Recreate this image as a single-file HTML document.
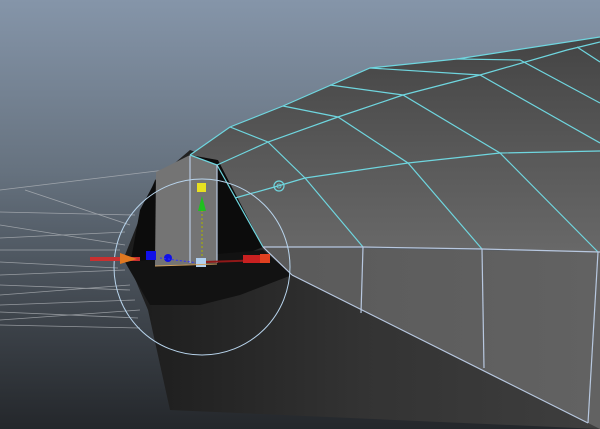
<!DOCTYPE html>
<html><head><meta charset="utf-8"><style>
html,body{margin:0;padding:0;width:600px;height:429px;overflow:hidden;background:#5a6676}
svg{display:block}
</style></head><body>
<svg width="600" height="429" viewBox="0 0 600 429" xmlns="http://www.w3.org/2000/svg">
<defs>
<linearGradient id="bg" x1="0" y1="0" x2="0" y2="1">
<stop offset="0" stop-color="#8595a9"/><stop offset="0.4" stop-color="#66727f"/><stop offset="0.75" stop-color="#3d434a"/><stop offset="1" stop-color="#24272b"/>
</linearGradient>
<linearGradient id="body" x1="0" y1="0" x2="1" y2="0">
<stop offset="0" stop-color="#1c1c1c"/><stop offset="0.5" stop-color="#333"/><stop offset="1" stop-color="#3e3e3e"/>
</linearGradient>
<linearGradient id="top" x1="0" y1="0" x2="0" y2="1">
<stop offset="0" stop-color="#444"/><stop offset="0.5" stop-color="#575757"/><stop offset="1" stop-color="#686868"/>
</linearGradient>
<linearGradient id="side" x1="0" y1="0" x2="1" y2="0">
<stop offset="0" stop-color="#5a5a5a"/><stop offset="1" stop-color="#626262"/>
</linearGradient>
</defs>
<rect width="600" height="429" fill="url(#bg)"/>
<g stroke="#b9bcc0" stroke-width="0.8" fill="none" opacity="0.7">
<line x1="0" y1="190" x2="165" y2="170"/>
<line x1="0" y1="212" x2="135" y2="215"/>
<line x1="25" y1="190" x2="130" y2="225"/>
<line x1="0" y1="225" x2="125" y2="245"/>
<line x1="0" y1="238" x2="125" y2="232"/>
<line x1="0" y1="250" x2="120" y2="250"/>
<line x1="0" y1="262" x2="118" y2="268"/>
<line x1="0" y1="275" x2="125" y2="270"/>
<line x1="0" y1="285" x2="130" y2="290"/>
<line x1="0" y1="295" x2="130" y2="285"/>
<line x1="0" y1="305" x2="135" y2="300"/>
<line x1="0" y1="312" x2="138" y2="318"/>
<line x1="0" y1="320" x2="140" y2="310"/>
<line x1="0" y1="325" x2="140" y2="328"/>
</g>
<polygon points="190,150 155,180 125,255 148,310 170,410 600,429 600,260 263,247 218,160" fill="url(#body)"/>
<polygon points="160,172 190,155 218,160 263,247 218,265 130,265 140,210" fill="#0c0c0c"/>
<polygon points="125,262 263,250 292,275 240,295 200,305 150,305" fill="#121212"/>
<polygon points="156,172 190,155 217,165 217,263 155,266" fill="#747474"/>
<polygon points="190,155 230,127 283,106 370,68 457,59 600,37 600,252 482,249 363,247 263,247 218,160" fill="url(#top)"/>
<polygon points="263,247 600,252 600,429 588,423 292,275" fill="url(#side)"/>
<g stroke="#6fd6df" stroke-width="1.2" fill="none">
<polyline points="190,155 230,127 283,106 370,68 457,59 600,37"/>
<polyline points="217,165 268,142 338,117 403,95 480,75 567,50 600,42"/>
<polyline points="235,198 278,186 305,178 408,163 500,153 600,151"/>
<polyline points="230,127 268,142 305,178 363,247"/>
<polyline points="283,106 338,117 408,163 482,249"/>
<polyline points="330,85 403,95 500,153 598,252"/>
<polyline points="370,68 480,75 600,143"/>
<polyline points="457,59 520,60 600,103"/>
<polyline points="577,47 600,62"/>
<line x1="217" y1="165" x2="263" y2="247"/>
<line x1="190" y1="155" x2="217" y2="165"/>
</g>
<g stroke="#b8c8e0" stroke-width="1.2" fill="none">
<polyline points="263,247 363,247 482,249 600,252"/>
<line x1="363" y1="247" x2="361" y2="313"/>
<line x1="482" y1="249" x2="484" y2="368"/>
<line x1="598" y1="252" x2="588" y2="423"/>
<line x1="263" y1="247" x2="292" y2="275"/>
<line x1="292" y1="275" x2="588" y2="423"/>
<line x1="190" y1="156" x2="190" y2="263"/>
<line x1="217" y1="165" x2="217" y2="263"/>
</g>
<circle cx="202" cy="267" r="88" fill="none" stroke="#b8d4ec" stroke-width="1"/>
<circle cx="279" cy="186" r="5" fill="none" stroke="#6fd6df" stroke-width="1.2"/>
<circle cx="279" cy="186" r="2" fill="none" stroke="#6fd6df" stroke-width="0.8"/>
<line x1="90" y1="259" x2="140" y2="259" stroke="#c83030" stroke-width="4"/>
<polygon points="120,253 137,259 120,264" fill="#e07820"/>
<rect x="146" y="251" width="10" height="9" fill="#1010e8"/>
<circle cx="168" cy="258" r="4" fill="#1010e8"/>
<line x1="160" y1="258" x2="198" y2="263" stroke="#3030ff" stroke-width="1" stroke-dasharray="2,2"/>
<line x1="205" y1="262" x2="265" y2="260" stroke="#901818" stroke-width="2"/>
<rect x="243" y="255" width="24" height="8" fill="#c82020"/>
<rect x="260" y="254" width="10" height="9" fill="#e04020"/>
<line x1="202" y1="210" x2="202" y2="260" stroke="#9aa020" stroke-width="1.5" stroke-dasharray="2,2"/>
<polygon points="202,196 198,211 206,211" fill="#20c020"/>
<rect x="197" y="183" width="9" height="9" fill="#e8e020"/>
<rect x="196" y="258" width="10" height="9" fill="#b0d0f0"/>
<line x1="155" y1="266" x2="217" y2="264" stroke="#d0a060" stroke-width="1"/>
</svg>
</body></html>
